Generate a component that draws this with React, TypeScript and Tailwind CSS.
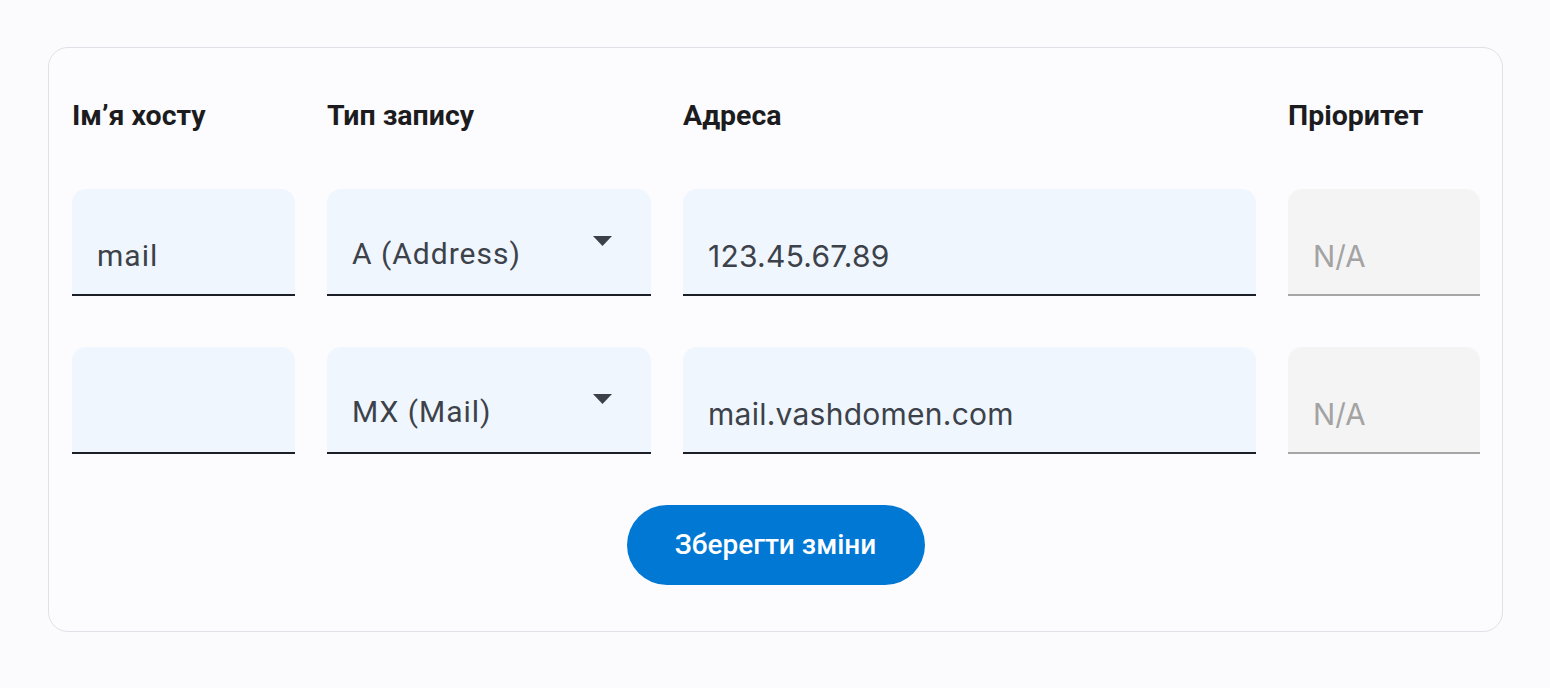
import React from "react";

const roboto = { fontFamily: "Roboto, 'Noto Sans', sans-serif" };

function Arrow() {
  return (
    <svg width="19" height="10" viewBox="0 0 19 10" className="absolute right-[39px] top-[47px]">
      <path d="M0 0 L19 0 L9.5 10 Z" fill="#3c4049" />
    </svg>
  );
}

function Field({ value, kind }: { value: string; kind: "host" | "select" | "address" | "na" }) {
  const base = "relative h-[107px] rounded-t-[14px] pl-[25px] leading-[36px]";
  if (kind === "na") {
    return (
      <div className={`${base} bg-[#f4f4f5] border-b-2 border-[#a6a6a6] pt-[49px] text-[29.5px] text-[#a3a3a3] font-[Inter,sans-serif]`}>
        {value}
      </div>
    );
  }
  if (kind === "select") {
    return (
      <div className={`${base} bg-[#eff6fd] border-b-2 border-[#1c2026] pt-[47px] text-[30px] tracking-[1px] text-[#3d424a] font-[Roboto,sans-serif]`}>
        {value}
        <Arrow />
      </div>
    );
  }
  if (kind === "address") {
    return (
      <div className={`${base} bg-[#eff6fd] border-b-2 border-[#1c2026] pt-[49px] text-[#3d424a] text-[30px] tracking-[0.25px] font-[Inter,sans-serif]`}>
        {value}
      </div>
    );
  }
  return (
    <div className={`${base} bg-[#eff6fd] border-b-2 border-[#1c2026] pt-[49px] text-[30px] tracking-[1px] text-[#3d424a] font-[Roboto,sans-serif]`}>
      {value}
    </div>
  );
}

export default function App() {
  return (
    <div className="min-h-[688px] w-full bg-[#fbfbfe] pt-[47px] px-[48px]" style={roboto}>
      <div className="w-[1455px] rounded-[20px] border border-[#dfe1e6] bg-[#fcfcff] px-[23px] pt-[50px] pb-[46px]">
        <div className="grid grid-cols-[223px_324px_573px_192px] gap-x-[32px]">
          {["Ім’я хосту", "Тип запису", "Адреса", "Пріоритет"].map((h) => (
            <div key={h} className="text-[28.5px] leading-[36px] font-bold text-[#1c1c1e]">
              {h}
            </div>
          ))}
        </div>
        <div className="mt-[55px] grid grid-cols-[223px_324px_573px_192px] gap-x-[32px] gap-y-[51px]">
          <Field value="mail" kind="host" />
          <Field value="A (Address)" kind="select" />
          <Field value="123.45.67.89" kind="address" />
          <Field value="N/A" kind="na" />
          <Field value="" kind="host" />
          <Field value="MX (Mail)" kind="select" />
          <Field value="mail.vashdomen.com" kind="address" />
          <Field value="N/A" kind="na" />
        </div>
        <div className="mt-[51px] flex justify-center">
          <button className="h-[80px] w-[298px] rounded-full bg-[#0078d4] text-[28px] font-medium text-white">
            Зберегти зміни
          </button>
        </div>
      </div>
    </div>
  );
}
